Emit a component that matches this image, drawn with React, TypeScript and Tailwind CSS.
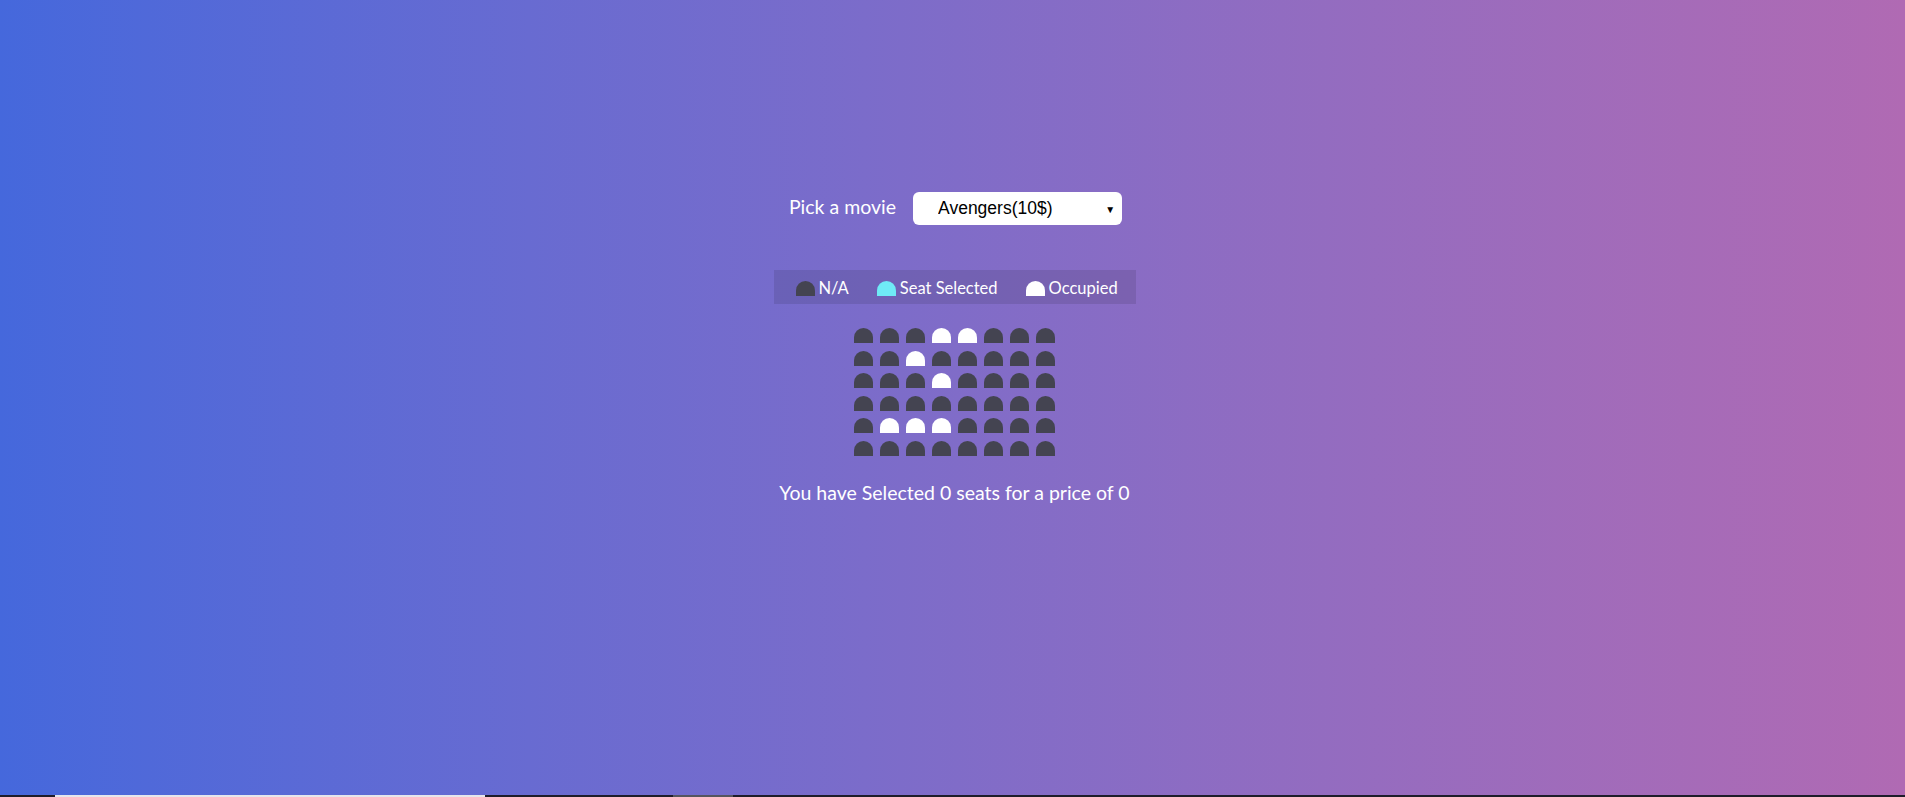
const occupied: number[][] = [
  [3, 4],
  [2],
  [3],
  [],
  [1, 2, 3],
  [],
];

function Seat({ kind }: { kind: "na" | "selected" | "occupied" }) {
  const color =
    kind === "occupied"
      ? "bg-white"
      : kind === "selected"
      ? "bg-[#6feaf6]"
      : "bg-[#444451]";
  return <div className={`h-[15px] w-[19px] rounded-t-[12px] ${color}`} />;
}

export default function App() {
  return (
    <div
      className="flex h-[797px] w-full flex-col overflow-hidden bg-linear-to-r from-[#4568dc] to-[#b06ab3] text-white"
      style={{ fontFamily: "Lato, 'Noto Sans', sans-serif" }}
    >
      <div className="flex flex-1 flex-col items-center pt-[192px]">
        <div className="ml-[6px] flex h-[33px] items-center">
          <span className="pb-[4px] text-[19.5px] leading-none">Pick a movie</span>
          <div className="relative ml-[17px]">
            <select
              className="h-[33px] w-[209px] appearance-none rounded-[6px] bg-white pl-[25px] pr-8 text-[17.5px] text-black outline-none"
              style={{ fontFamily: "'Liberation Sans', Arial, sans-serif" }}
              defaultValue="10"
            >
              <option value="10">Avengers(10$)</option>
              <option value="12">Joker(12$)</option>
              <option value="8">Toy Story 4(8$)</option>
              <option value="9">The Lion King(9$)</option>
            </select>
            <span className="pointer-events-none absolute right-[7px] top-[10px] text-[10px] text-black">
              ▼
            </span>
          </div>
        </div>

        <ul className="mt-[45px] ml-[4px] flex h-[34px] w-[362px] items-center gap-[28px] bg-black/10 pl-[22px] pt-[2px] text-[16.5px]">
          <li className="flex items-center gap-[4px]">
            <Seat kind="na" />
            <span>N/A</span>
          </li>
          <li className="flex items-center gap-[4px]">
            <Seat kind="selected" />
            <span>Seat Selected</span>
          </li>
          <li className="flex items-center gap-[4px]">
            <Seat kind="occupied" />
            <span>Occupied</span>
          </li>
        </ul>

        <div className="mt-[24px] ml-[3px] flex flex-col gap-[7.5px]">
          {occupied.map((row, r) => (
            <div key={r} className="flex gap-[7px]">
              {Array.from({ length: 8 }).map((_, c) => (
                <Seat key={c} kind={row.includes(c) ? "occupied" : "na"} />
              ))}
            </div>
          ))}
        </div>

        <p className="mt-[22px] ml-[4px] text-[19.5px]">
          You have Selected <span>0</span> seats for a price of <span>0</span>
        </p>
      </div>

      <div className="flex h-[2px] w-full bg-[#1e1d2a]">
        <div className="ml-[55px] w-[430px] bg-[#e6e6ec]" />
        <div className="ml-[188px] w-[60px] bg-[#55555f]" />
      </div>
    </div>
  );
}
